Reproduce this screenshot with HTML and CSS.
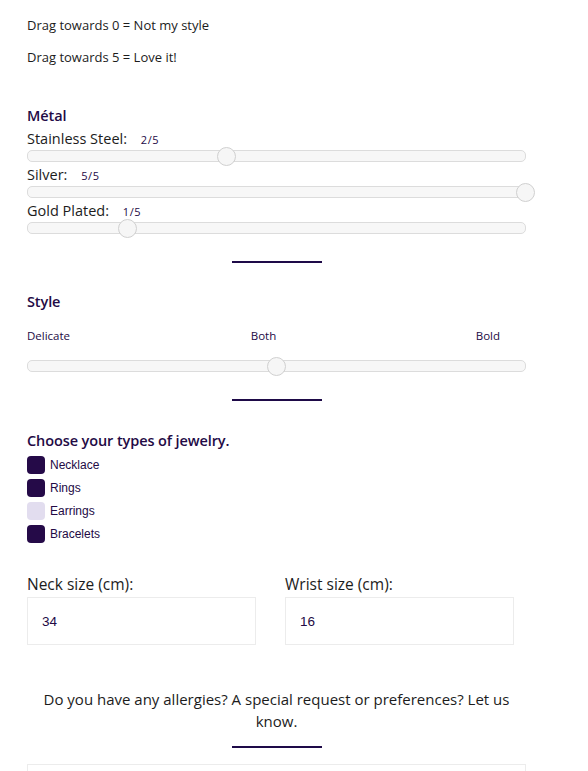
FILE: index.html
```html
<!DOCTYPE html>
<html lang="en">
<head>
<meta charset="utf-8">
<title>Jewelry preferences</title>
<link rel="stylesheet" href="styles.css">
</head>
<body>
<div class="form">
  <p class="hint">Drag towards 0 = Not my style</p>
  <p class="hint hint-2">Drag towards 5 = Love it!</p>

  <section class="metal">
    <h3 class="heading">Métal</h3>
    <div class="slider-row">
      <div class="slider-label">Stainless Steel: <span class="val">2/5</span></div>
      <div class="track"><span class="thumb" style="left:40%"></span></div>
    </div>
    <div class="slider-row">
      <div class="slider-label">Silver: <span class="val">5/5</span></div>
      <div class="track"><span class="thumb" style="left:100%"></span></div>
    </div>
    <div class="slider-row">
      <div class="slider-label">Gold Plated: <span class="val">1/5</span></div>
      <div class="track"><span class="thumb" style="left:20%"></span></div>
    </div>
  </section>

  <div class="divider divider-1"></div>

  <section class="style">
    <h3 class="heading">Style</h3>
    <div class="scale">
      <span class="scale-left">Delicate</span>
      <span class="scale-mid">Both</span>
      <span class="scale-right">Bold</span>
    </div>
    <div class="track track-style"><span class="thumb" style="left:50%"></span></div>
  </section>

  <div class="divider divider-2"></div>

  <section class="types">
    <h3 class="heading">Choose your types of jewelry.</h3>
    <ul class="checks">
      <li class="check"><span class="box on"></span>Necklace</li>
      <li class="check"><span class="box on"></span>Rings</li>
      <li class="check"><span class="box"></span>Earrings</li>
      <li class="check"><span class="box on"></span>Bracelets</li>
    </ul>
  </section>

  <section class="sizes">
    <div class="field">
      <div class="field-label">Neck size (cm):</div>
      <div class="input">34</div>
    </div>
    <div class="field">
      <div class="field-label">Wrist size (cm):</div>
      <div class="input">16</div>
    </div>
  </section>

  <p class="question">Do you have any allergies? A special request or preferences? Let us know.</p>
  <div class="divider divider-3"></div>
  <div class="textarea"></div>
</div>
</body>
</html>
```

FILE: styles.css
```css
html, body {
  margin: 0;
  padding: 0;
  background: #ffffff;
}

body {
  font-family: "Open Sans", "DejaVu Sans", sans-serif;
  color: #1a1a1a;
  overflow: hidden;
}

.form {
  width: 499px;
  margin-left: 27px;
  padding-top: 16px;
}

.hint {
  margin: 0;
  font-size: 13px;
  line-height: 18px;
  color: #1c1c1c;
}

.hint-2 {
  margin-top: 14px;
}

.heading {
  margin: 0;
  font-size: 14.5px;
  line-height: 20px;
  font-weight: 600;
  color: #230a45;
  letter-spacing: -0.1px;
}

.metal {
  margin-top: 40px;
}

.metal .heading {
  margin-bottom: 4px;
}

.slider-row {
  margin-bottom: 4px;
}

.slider-label {
  height: 18px;
  font-size: 14.5px;
  line-height: 18px;
  color: #1c1c1c;
  margin-bottom: 2px;
}

.val {
  font-size: 11px;
  line-height: 0;
  color: #230a45;
  margin-left: 10px;
  letter-spacing: 0.6px;
}

.track {
  position: relative;
  height: 10px;
  border: 1px solid #dcdcdc;
  border-radius: 5px;
  background: #f7f7f7;
}

.thumb {
  position: absolute;
  top: 50%;
  width: 17px;
  height: 17px;
  margin-left: -9.5px;
  margin-top: -9.5px;
  border: 1px solid #d0d0d0;
  border-radius: 50%;
  background: #f6f6f6;
}

.divider {
  width: 90px;
  height: 2px;
  background: #1e0a48;
  margin-left: 205px;
}

.divider-1 {
  margin-top: 27px;
}

.style {
  margin-top: 29px;
}

.scale {
  display: grid;
  grid-template-columns: 1fr 1fr 1fr;
  width: 473px;
  margin-top: 16px;
  font-size: 11.5px;
  line-height: 16px;
  color: #230a45;
}

.scale-mid {
  text-align: center;
}

.scale-right {
  text-align: right;
}

.track-style {
  margin-top: 16px;
}

.divider-2 {
  margin-top: 27px;
}

.types {
  margin-top: 30px;
}

.checks {
  list-style: none;
  margin: 5px 0 0;
  padding: 0;
  display: flex;
  flex-direction: column;
  gap: 5px;
}

.check {
  display: flex;
  align-items: center;
  gap: 5px;
  height: 18px;
  font-family: "Liberation Sans", Arial, sans-serif;
  font-size: 12px;
  color: #230a45;
}

.box {
  width: 18px;
  height: 18px;
  border-radius: 4px;
  background: #e2ddef;
}

.box.on {
  background: #250a48;
}

.sizes {
  display: grid;
  grid-template-columns: 229px 229px;
  column-gap: 29px;
  margin-top: 31px;
}

.field-label {
  font-size: 15.5px;
  line-height: 20px;
  color: #1c1c1c;
  margin-bottom: 3px;
}

.input {
  height: 46px;
  border: 1px solid #ececec;
  box-sizing: content-box;
  display: flex;
  align-items: center;
  padding-left: 14px;
  font-family: "Liberation Sans", Arial, sans-serif;
  font-size: 13.5px;
  color: #230a45;
}

.question {
  margin: 43px 0 0;
  padding: 0 10px;
  text-align: center;
  font-size: 15px;
  line-height: 22px;
  color: #1c1c1c;
}

.divider-3 {
  margin-top: 14px;
}

.textarea {
  margin-top: 16px;
  height: 60px;
  border: 1px solid #ececec;
}
```
